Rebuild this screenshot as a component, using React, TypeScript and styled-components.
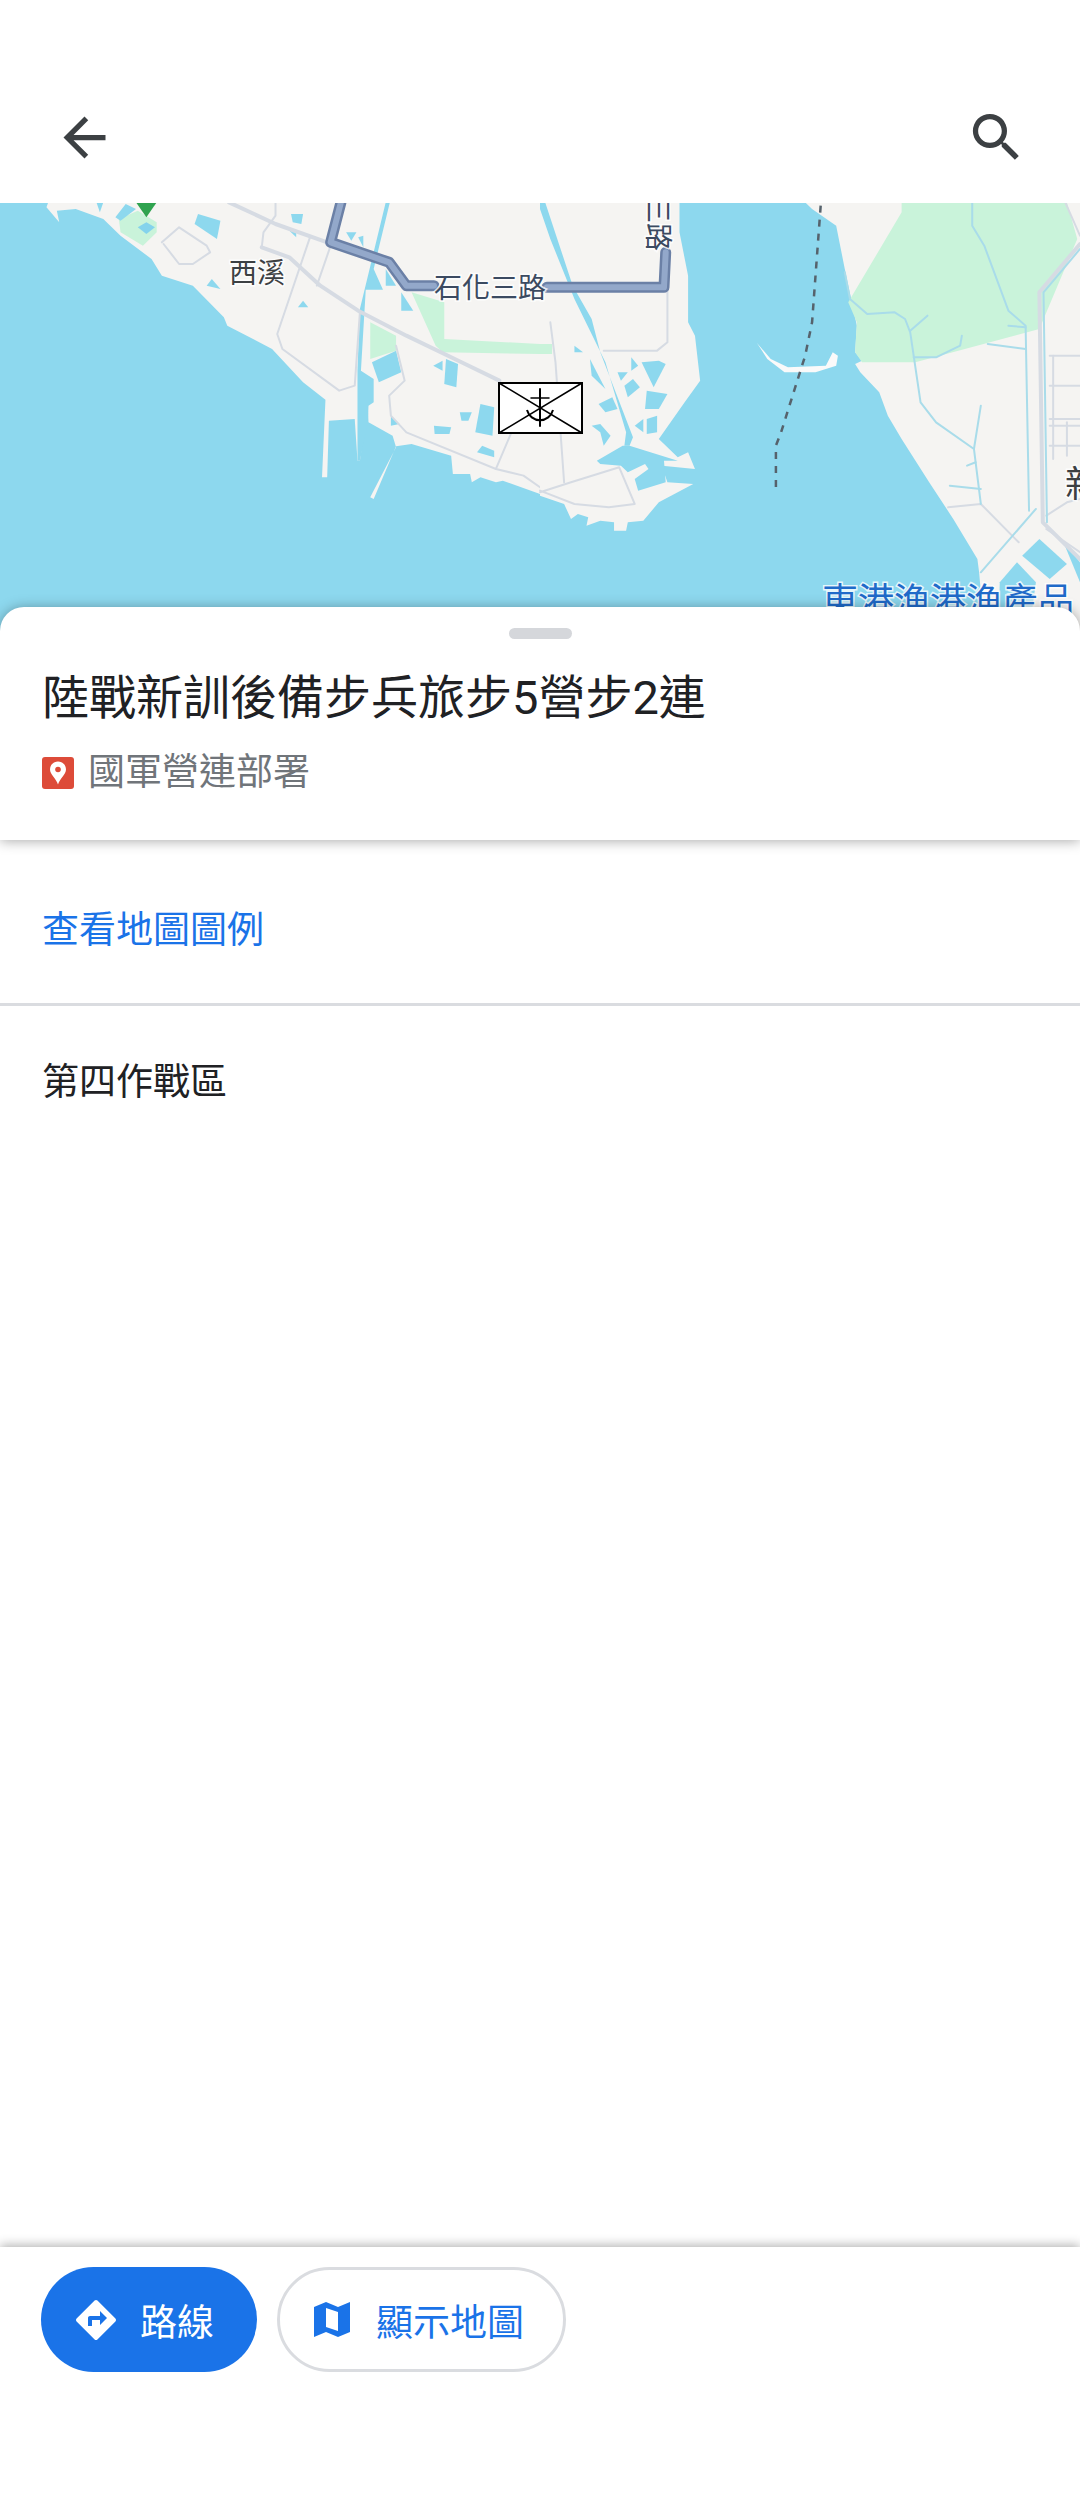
import styled, { createGlobalStyle } from "styled-components";

const GlobalStyle = createGlobalStyle`
  html, body {
    margin: 0;
    padding: 0;
    background: #fff;
    font-family: Roboto, "Noto Sans CJK TC", sans-serif;
  }
  * {
    box-sizing: border-box;
  }
`;

const Page = styled.div`
  width: 1080px;
  height: 2520px;
  display: flex;
  flex-direction: column;
  background: #fff;
  overflow: hidden;
`;

const Header = styled.header`
  height: 203px;
  flex: none;
  display: flex;
  justify-content: space-between;
  align-items: flex-start;
  padding: 106px 52px 0 53px;
  background: #fff;
`;

const HeaderIcon = styled.svg`
  width: 63px;
  height: 63px;
  fill: #3c4043;
  display: block;
`;

const MapSvg = styled.svg`
  display: block;
  flex: none;
  width: 1080px;
  height: 428px;
  background: #8dd8ee;

  polyline,
  line {
    fill: none;
    vector-effect: non-scaling-stroke;
    stroke-linejoin: round;
    stroke-linecap: round;
  }
`;

const MapLabel = styled.text<{ $size: number; $color: string }>`
  font-family: "Noto Sans CJK TC", sans-serif;
  font-size: ${(p) => p.$size}px;
  fill: ${(p) => p.$color};
  stroke: rgba(255, 255, 255, 0.8);
  stroke-width: 3px;
  paint-order: stroke;
`;

const Sheet = styled.section`
  position: relative;
  flex: none;
  height: 233px;
  margin-top: -24px;
  padding: 0 42px;
  border-radius: 24px 24px 0 0;
  background: #fff;
  box-shadow: 0 1px 13px rgba(0, 0, 0, 0.34);
`;

const Handle = styled.div`
  width: 63px;
  height: 11px;
  margin: 21px auto 0;
  border-radius: 6px;
  background: #d5d7db;
`;

const Title = styled.h1`
  margin: 24px 0 0;
  font-size: 47px;
  font-weight: 400;
  line-height: 70px;
  color: #202124;
  white-space: nowrap;
`;

const Category = styled.div`
  display: flex;
  align-items: center;
  gap: 14px;
  margin-top: 15px;
  font-size: 37px;
  line-height: 50px;
  color: #70757a;
`;

const PinBadge = styled.svg`
  width: 32px;
  height: 32px;
  display: block;
`;

const Content = styled.main`
  flex: 1;
  min-height: 0;
`;

const LegendRow = styled.div`
  height: 166px;
  display: flex;
  align-items: center;
  padding: 10px 42px 0;
  border-bottom: 3px solid #dadce0;
  font-size: 37px;
  color: #1a73e8;
`;

const Region = styled.div`
  padding: 52px 42px 0;
  font-size: 37px;
  line-height: 50px;
  color: #202124;
`;

const Footer = styled.footer`
  position: relative;
  flex: none;
  height: 273px;
  display: flex;
  align-items: flex-start;
  gap: 20px;
  padding: 20px 41px 0;
  background: #fff;
  box-shadow: 0 -2px 10px rgba(0, 0, 0, 0.3);
`;

const PillButton = styled.button<{ $primary?: boolean }>`
  height: 105px;
  display: flex;
  align-items: center;
  border-radius: 53px;
  font-family: inherit;
  font-size: 37px;
  color: ${(p) => (p.$primary ? "#fff" : "#1a73e8")};
  background: ${(p) => (p.$primary ? "#1a73e8" : "#fff")};
  border: ${(p) => (p.$primary ? "none" : "3px solid #dadce0")};
  width: ${(p) => (p.$primary ? "216px" : "289px")};
  padding: ${(p) => (p.$primary ? "0 0 0 31px" : "0 0 0 34px")};
  gap: ${(p) => (p.$primary ? "20px" : "26px")};
`;

const ButtonIcon = styled.svg<{ $size: number }>`
  width: ${(p) => p.$size}px;
  height: ${(p) => p.$size}px;
  display: block;
  flex: none;
  fill: currentColor;
`;

// map shapes are traced in the coordinates of two crops, hence the group transforms
const WATER = "#8dd8ee";
const LAND = "#f5f4f2";
const GREEN = "#c9f3da";
const ROAD = "#d6dbe3";
const RIVER = "#a9dcea";

const leftPonds = [
  "280,40 300,40 290,70",
  "335,85 365,45 395,60 350,95",
  "565,105 575,75 640,95 630,150",
  "600,290 615,270 640,300",
  "865,355 880,335 895,355",
  "845,75 880,75 875,105 850,100",
  "835,120 860,125 860,145",
  "1005,130 1035,130 1020,155",
  "1040,145 1055,140 1055,175",
  "1120,40 1132,40 1085,240 1112,302 1062,302 1048,545 1085,570 1085,640 1070,650 1068,700 1045,815 1038,815 1038,545 1045,360",
  "1080,520 1150,485 1165,550 1100,580",
  "1120,240 1150,290 1120,290",
  "1165,310 1200,365 1165,365",
  "1258,530 1285,515 1285,545",
  "1295,510 1330,525 1325,595 1290,585",
  "1395,645 1435,655 1430,740 1380,730",
  "1335,670 1370,670 1360,695 1340,695",
  "1260,710 1310,715 1305,735 1262,735",
  "1400,770 1435,785 1435,805 1385,790",
  "1135,680 1160,705 1135,710",
];

const leftGreens = [
  "345,90 400,65 455,100 455,130 415,170 350,130",
  "1075,400 1150,440 1150,485 1075,510",
  "1195,310 1290,340 1290,450 1568,465 1568,495 1285,490 1265,470",
];

const leftRoads = [
  "665,40 800,105 950,160",
  "760,175 840,205 930,290 1040,365 1180,440 1340,520 1450,575",
  "800,40 800,80 765,130 760,175",
  "900,145 805,435 820,480 985,605 1030,590 1045,370",
  "920,290 960,170",
  "470,160 520,115 600,170 610,190 560,225 520,225 475,165",
  "1150,470 1175,575 1130,620 1135,680 1180,730 1440,840 1520,860 1568,895",
  "1440,840 1485,730",
];

const midPonds = [
  "0,40 15,40 95,290 150,390 175,490 270,745 260,770 245,770 250,730 190,520 100,330 30,150 0,60",
  "165,815 240,770 260,770 400,815 360,815 365,880 285,905 275,870 315,840 305,825 255,850 235,830 175,825",
  "100,470 125,490 100,490",
  "145,510 190,600 150,560",
  "225,550 255,550 235,575",
  "265,505 285,530 265,545",
  "295,520 345,515 365,525 330,595",
  "245,590 270,570 290,595 255,625",
  "310,605 370,615 345,660 305,660",
  "310,690 340,680 340,730 310,735",
  "275,710 300,690 300,730",
  "170,645 210,625 225,660 190,670",
  "150,710 175,705 205,740 185,770 175,730",
  "1400,1100 1450,1050 1530,1125 1480,1170",
  "1335,1180 1385,1120 1440,1180 1420,1330 1330,1330",
  "1520,1060 1568,1120 1568,1180",
];

const midRoads = [
  "370,300 370,460 340,485 185,485",
  "30,400 45,520 70,880",
  "0,910 90,880 230,835 275,945 200,955 100,945 0,905",
  "1185,955 1280,945 1390,1060",
  "1525,40 1568,140",
  "1480,500 1568,500",
  "1480,590 1568,590",
  "1480,690 1568,690",
  "1480,710 1568,710",
  "1480,770 1568,770",
  "1490,500 1490,810",
  "1530,700 1530,800",
  "1470,1020 1568,1090",
  "1470,980 1530,940 1568,930",
];

const rivers = [
  "885,250 900,330 950,375 1030,370 1060,390 1075,430 1105,640 1150,700 1260,780 1280,945",
  "1075,425 1125,380",
  "1085,505 1150,505 1220,470 1225,440",
  "1260,780 1280,650",
  "1240,830 1265,820",
  "1190,890 1280,900",
  "1255,40 1255,110 1290,170 1360,365 1410,410 1420,965",
  "1360,410 1410,415",
  "1300,465 1410,480",
  "1280,1150 1440,960",
];

function MapView() {
  return (
    <MapSvg viewBox="0 0 1080 428">
      <g transform="translate(0,-14) scale(0.3444,0.3333)">
        <polygon
          fill={LAND}
          points="140,40 135,55 172,100 165,65 220,60 300,90 350,140 440,210 470,260 560,290 650,385 660,410 790,480 880,580 945,632 935,865 950,865 955,695 1030,690 1038,815 1045,815 1068,650 1070,700 1140,740 1150,775 1075,925 1085,930 1150,772 1195,765 1310,800 1315,855 1365,855 1370,880 1395,865 1440,880 1460,875 1568,915 1568,40"
        />
        {leftGreens.map((p) => (
          <polygon key={p} points={p} fill={GREEN} />
        ))}
        <polygon points="400,115 425,100 450,115 425,135" fill="#84d3ec" />
        {leftPonds.map((p) => (
          <polygon key={p} points={p} fill={WATER} />
        ))}
        {leftRoads.map((p, i) => (
          <polyline key={p} points={p} stroke={ROAD} strokeWidth={i < 2 ? 4 : 2} />
        ))}
        <polygon points="395,40 455,40 425,85" fill="#2fa34f" />
        <polyline points="990,40 960,160 1130,220 1180,290 1260,290" stroke="#6b80a6" strokeWidth={11} />
        <polyline points="990,40 960,160 1130,220 1180,290 1260,290" stroke="#93a8ca" strokeWidth={6} />
      </g>
      <g transform="translate(540,-14) scale(0.3444,0.3333)">
        <polygon
          fill={LAND}
          points="0,40 405,40 405,130 430,260 430,400 450,440 465,575 420,640 345,750 400,805 430,790 450,840 355,830 360,850 370,880 445,885 345,940 300,995 255,1000 250,1025 215,1025 215,1000 175,995 135,1010 140,985 110,975 90,990 70,945 0,920"
        />
        <polygon
          fill={LAND}
          points="770,40 790,60 860,110 885,240 920,410 915,490 935,515 915,525 930,550 985,610 1010,680 1050,750 1130,880 1200,990 1270,1110 1275,1150 1290,1330 1568,1330 1568,40"
        />
        <polygon fill={GREEN} points="1050,40 1530,40 1560,150 1450,420 1090,520 935,520 915,490 920,400 895,340 1050,70" />
        <polygon fill={GREEN} points="0,465 35,465 35,495 0,495" />
        <polygon fill="#fafafa" points="630,462 660,510 710,550 800,550 860,530 865,500 850,490 830,530 720,535 670,510" />
        {midPonds.map((p) => (
          <polygon key={p} points={p} fill={WATER} />
        ))}
        {midRoads.map((p) => (
          <polyline key={p} points={p} stroke={ROAD} strokeWidth={2} />
        ))}
        {rivers.map((p) => (
          <polyline key={p} points={p} stroke={RIVER} strokeWidth={2} />
        ))}
        <polyline points="1568,165 1450,310 1460,1000 1568,1110" stroke={ROAD} strokeWidth={4} />
        <polyline points="1568,180 1462,310 1472,1000" stroke={RIVER} strokeWidth={2} />
        <polyline
          points="815,50 790,400 770,500 700,730 685,770 685,915"
          stroke="#56626c"
          strokeWidth={2.5}
          strokeDasharray="7 7"
          style={{ strokeLinecap: "butt" }}
        />
        <polyline points="20,295 360,295 365,190" stroke="#6b80a6" strokeWidth={11} />
        <polyline points="20,295 360,295 365,190" stroke="#93a8ca" strokeWidth={6} />
      </g>
      <MapLabel x={229} y={80} $size={28} $color="#3c4043">西溪</MapLabel>
      <MapLabel x={434} y={95} $size={28} $color="#3b4a61">石化三路</MapLabel>
      <MapLabel transform="translate(648,-8) rotate(90)" $size={28} $color="#3b4a61">三路</MapLabel>
      <MapLabel x={1065} y={294} $size={36} $color="#3c4043">新</MapLabel>
      <MapLabel x={822} y={411} $size={36} $color="#1f6ac9">東港漁港漁產品</MapLabel>
      <g transform="translate(498,179)">
        <rect x="1" y="1" width="83" height="50" fill="#fff" stroke="#000" strokeWidth="2" />
        <line x1="1" y1="1" x2="84" y2="51" stroke="#000" strokeWidth="1.5" />
        <line x1="84" y1="1" x2="1" y2="51" stroke="#000" strokeWidth="1.5" />
        <line x1="42" y1="7" x2="42" y2="44" stroke="#000" strokeWidth="2" />
        <line x1="33" y1="16" x2="51" y2="16" stroke="#000" strokeWidth="1.5" />
        <path d="M29 28 A13.5 14 0 0 0 55 28" fill="none" stroke="#000" strokeWidth="2" />
      </g>
    </MapSvg>
  );
}

export default function App() {
  return (
    <Page>
      <GlobalStyle />
      <Header>
        <HeaderIcon viewBox="0 0 24 24">
          <path d="M20 11H7.83l5.59-5.59L12 4l-8 8 8 8 1.41-1.41L7.83 13H20v-2z" />
        </HeaderIcon>
        <HeaderIcon viewBox="0 0 24 24">
          <path d="M15.5 14h-.79l-.28-.27A6.47 6.47 0 0 0 16 9.5 6.5 6.5 0 1 0 9.5 16c1.61 0 3.09-.59 4.23-1.57l.27.28v.79l5 4.99L20.49 19l-4.99-5zm-6 0C7.01 14 5 11.99 5 9.5S7.01 5 9.5 5 14 7.01 14 9.5 11.99 14 9.5 14z" />
        </HeaderIcon>
      </Header>
      <MapView />
      <Sheet>
        <Handle />
        <Title>陸戰新訓後備步兵旅步5營步2連</Title>
        <Category>
          <PinBadge viewBox="0 0 32 32">
            <rect width="32" height="32" rx="3" fill="#dd4b39" />
            <path
              d="M16 4.5c-4.6 0-8 3.4-8 7.8 0 5.4 6 9 8 15.2 2-6.2 8-9.8 8-15.2 0-4.4-3.4-7.8-8-7.8z"
              fill="#fff"
            />
            <circle cx="16" cy="12.5" r="2.8" fill="#dd4b39" />
          </PinBadge>
          國軍營連部署
        </Category>
      </Sheet>
      <Content>
        <LegendRow>查看地圖圖例</LegendRow>
        <Region>第四作戰區</Region>
      </Content>
      <Footer>
        <PillButton $primary>
          <ButtonIcon $size={48} viewBox="0 0 24 24">
            <path d="M21.71 11.29l-9-9c-.39-.39-1.02-.39-1.41 0l-9 9c-.39.39-.39 1.02 0 1.41l9 9c.39.39 1.02.39 1.41 0l9-9c.39-.38.39-1.01 0-1.41zM14 14.5V12h-4v3H8v-4c0-.55.45-1 1-1h5V7.5l3.5 3.5-3.5 3.5z" />
          </ButtonIcon>
          路線
        </PillButton>
        <PillButton>
          <ButtonIcon $size={36} viewBox="0 0 36 36">
            <path
              fillRule="evenodd"
              d="M0 5 12 0l12 5 12-5v30l-12 5-12-5-12 5zM12 6v19l12 4V10z"
            />
          </ButtonIcon>
          顯示地圖
        </PillButton>
      </Footer>
    </Page>
  );
}
